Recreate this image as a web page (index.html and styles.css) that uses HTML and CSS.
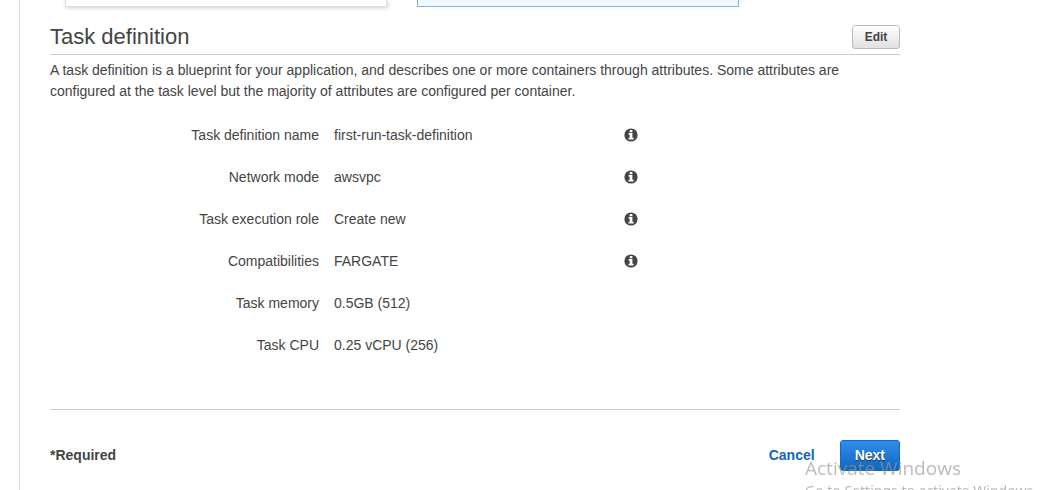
FILE: index.html
```html
<!DOCTYPE html>
<html lang="en">
<head>
<meta charset="utf-8">
<meta name="viewport" content="width=device-width, initial-scale=1">
<title>Task definition</title>
<link rel="stylesheet" href="styles.css">
</head>
<body>
<svg class="sprite" aria-hidden="true">
  <symbol id="info" viewBox="0 0 14 14">
    <circle cx="7" cy="7" r="6.6" fill="#444"/>
    <path d="M5.7 2h2.7v2.2H5.7zM4.6 5.1h3.8v4.6h1.2v1.8H4.5V9.7h1.2V6.8H4.6z" fill="#fff"/>
  </symbol>
</svg>
<main class="page">
  <div class="content">
    <div class="cards">
      <div class="card"></div>
      <div class="card card-selected"></div>
    </div>
    <section>
      <header class="section-header">
        <h2 class="section-title">Task definition</h2>
        <button class="button" type="button">Edit</button>
      </header>
      <p class="description">A task definition is a blueprint for your application, and describes one or more containers through attributes. Some attributes are configured at the task level but the majority of attributes are configured per container.</p>
      <dl class="details">
        <div class="row"><dt>Task definition name</dt><dd>first-run-task-definition</dd><svg class="info" role="img" aria-label="Info"><use href="#info"/></svg></div>
        <div class="row"><dt>Network mode</dt><dd>awsvpc</dd><svg class="info" role="img" aria-label="Info"><use href="#info"/></svg></div>
        <div class="row"><dt>Task execution role</dt><dd>Create new</dd><svg class="info" role="img" aria-label="Info"><use href="#info"/></svg></div>
        <div class="row"><dt>Compatibilities</dt><dd>FARGATE</dd><svg class="info" role="img" aria-label="Info"><use href="#info"/></svg></div>
        <div class="row"><dt>Task memory</dt><dd>0.5GB (512)</dd></div>
        <div class="row"><dt>Task CPU</dt><dd>0.25 vCPU (256)</dd></div>
      </dl>
    </section>
    <footer class="footer">
      <span class="required">*Required</span>
      <a class="cancel" href="#">Cancel</a>
      <button class="button button-primary" type="button">Next</button>
    </footer>
  </div>
</main>
<div class="watermark">
  <div class="watermark-title">Activate Windows</div>
  <div class="watermark-text">Go to Settings to activate Windows.</div>
</div>
</body>
</html>
```
FILE: styles.css
```css
* {
  box-sizing: border-box;
}

body {
  margin: 0;
  overflow: hidden;
  background: #fff;
  color: #444;
  font: 14px/21px "Liberation Sans", Arial, sans-serif;
}

.sprite {
  position: absolute;
  width: 0;
  height: 0;
}

.page {
  min-height: 100vh;
  margin-left: 19px;
  padding: 0 30px;
  border-left: 1px solid #ddd;
}

.content {
  max-width: 850px;
}

.cards {
  display: grid;
  grid-template-columns: repeat(2, minmax(0, 322px));
  gap: 30px;
  padding-left: 15px;
}

.card {
  height: 7px;
  border: 1px solid #ddd;
  border-top: 0;
  box-shadow: 1px 1px 4px rgba(0, 0, 0, 0.2);
}

.card-selected {
  border-color: #80b1e2;
  background: #f0f8ff;
  box-shadow: none;
}

.section-header {
  display: flex;
  align-items: center;
  justify-content: space-between;
  padding: 18px 0 5px;
  border-bottom: 1px solid #ccc;
}

.section-title {
  margin: 0;
  font-size: 22px;
  font-weight: 400;
  line-height: 24px;
}

.button {
  min-width: 48px;
  height: 24px;
  padding: 0 11px;
  border: 1px solid #bbb;
  border-radius: 3px;
  background: linear-gradient(#fff, #e0e0e0);
  color: #444;
  font: bold 12px/20px "Liberation Sans", Arial, sans-serif;
}

.description {
  margin: 5px 0 12px;
}

.details {
  margin: 0 0 43px;
}

.row {
  display: grid;
  grid-template-columns: 269px 275px 14px;
  column-gap: 15px;
  align-items: center;
  height: 42px;
}

.row dt {
  text-align: right;
}

.row dd {
  margin: 0;
}

.info {
  width: 14px;
  height: 14px;
}

.footer {
  display: flex;
  align-items: center;
  padding-top: 30px;
  border-top: 1px solid #ccc;
  font-weight: 700;
}

.required {
  flex: 1;
}

.cancel {
  margin-right: 25px;
  color: #1166bb;
  text-decoration: none;
}

.button-primary {
  height: 31px;
  padding: 0 14px 2px;
  border-color: #1c68b8;
  background: linear-gradient(#2f8eed, #1166bb);
  color: #fff;
  font-size: 14px;
  text-shadow: 0 1px 1px #234;
}

.watermark {
  position: fixed;
  top: 455px;
  left: 805px;
  color: rgba(150, 150, 150, 0.65);
  font-family: "Open Sans", "Noto Sans", sans-serif;
  white-space: nowrap;
  pointer-events: none;
}

.watermark-title {
  font-size: 19px;
  line-height: 26px;
}

.watermark-text {
  font-family: "Noto Sans", "Open Sans", sans-serif;
  font-size: 14px;
  line-height: 20px;
}
```
